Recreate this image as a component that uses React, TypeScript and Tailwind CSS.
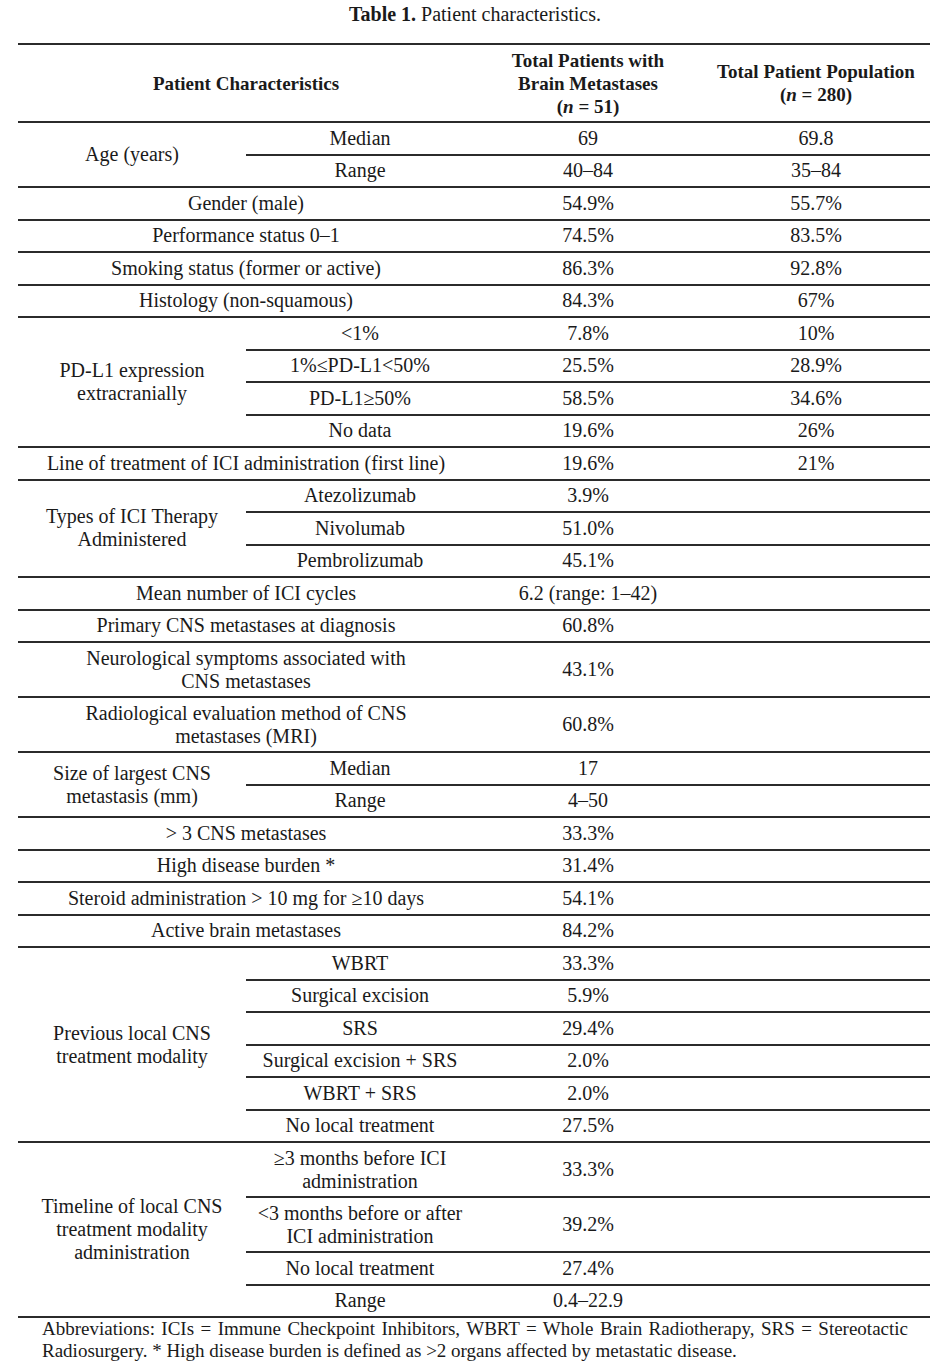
import React from "react";

type Sub = { label: string[]; c3: string; c4?: string; tall?: boolean };
type Section =
  | { kind: "full"; label: string[]; c3: string; c4?: string; tall?: boolean }
  | { kind: "group"; label: string[]; subs: Sub[] };

const data: Section[] = [
  {
    kind: "group",
    label: ["Age (years)"],
    subs: [
      { label: ["Median"], c3: "69", c4: "69.8" },
      { label: ["Range"], c3: "40–84", c4: "35–84" },
    ],
  },
  { kind: "full", label: ["Gender (male)"], c3: "54.9%", c4: "55.7%" },
  { kind: "full", label: ["Performance status 0–1"], c3: "74.5%", c4: "83.5%" },
  { kind: "full", label: ["Smoking status (former or active)"], c3: "86.3%", c4: "92.8%" },
  { kind: "full", label: ["Histology (non-squamous)"], c3: "84.3%", c4: "67%" },
  {
    kind: "group",
    label: ["PD-L1 expression", "extracranially"],
    subs: [
      { label: ["<1%"], c3: "7.8%", c4: "10%" },
      { label: ["1%≤PD-L1<50%"], c3: "25.5%", c4: "28.9%" },
      { label: ["PD-L1≥50%"], c3: "58.5%", c4: "34.6%" },
      { label: ["No data"], c3: "19.6%", c4: "26%" },
    ],
  },
  { kind: "full", label: ["Line of treatment of ICI administration (first line)"], c3: "19.6%", c4: "21%" },
  {
    kind: "group",
    label: ["Types of ICI Therapy", "Administered"],
    subs: [
      { label: ["Atezolizumab"], c3: "3.9%" },
      { label: ["Nivolumab"], c3: "51.0%" },
      { label: ["Pembrolizumab"], c3: "45.1%" },
    ],
  },
  { kind: "full", label: ["Mean number of ICI cycles"], c3: "6.2 (range: 1–42)" },
  { kind: "full", label: ["Primary CNS metastases at diagnosis"], c3: "60.8%" },
  { kind: "full", label: ["Neurological symptoms associated with", "CNS metastases"], c3: "43.1%", tall: true },
  { kind: "full", label: ["Radiological evaluation method of CNS", "metastases (MRI)"], c3: "60.8%", tall: true },
  {
    kind: "group",
    label: ["Size of largest CNS", "metastasis (mm)"],
    subs: [
      { label: ["Median"], c3: "17" },
      { label: ["Range"], c3: "4–50" },
    ],
  },
  { kind: "full", label: ["> 3 CNS metastases"], c3: "33.3%" },
  { kind: "full", label: ["High disease burden *"], c3: "31.4%" },
  { kind: "full", label: ["Steroid administration > 10 mg for ≥10 days"], c3: "54.1%" },
  { kind: "full", label: ["Active brain metastases"], c3: "84.2%" },
  {
    kind: "group",
    label: ["Previous local CNS", "treatment modality"],
    subs: [
      { label: ["WBRT"], c3: "33.3%" },
      { label: ["Surgical excision"], c3: "5.9%" },
      { label: ["SRS"], c3: "29.4%" },
      { label: ["Surgical excision + SRS"], c3: "2.0%" },
      { label: ["WBRT + SRS"], c3: "2.0%" },
      { label: ["No local treatment"], c3: "27.5%" },
    ],
  },
  {
    kind: "group",
    label: ["Timeline of local CNS", "treatment modality", "administration"],
    subs: [
      { label: ["≥3 months before ICI", "administration"], c3: "33.3%", tall: true },
      { label: ["<3 months before or after", "ICI administration"], c3: "39.2%", tall: true },
      { label: ["No local treatment"], c3: "27.4%" },
      { label: ["Range"], c3: "0.4–22.9" },
    ],
  },
];

function Lines({ lines }: { lines: string[] }) {
  return (
    <>
      {lines.map((l, i) => (
        <React.Fragment key={i}>
          {i > 0 && <br />}
          {l}
        </React.Fragment>
      ))}
    </>
  );
}

const cell = "flex items-center justify-center text-center";

export default function App() {
  return (
    <div
      className="w-[950px] h-[1362px] bg-white text-[#1a1a1a] text-[20px] leading-[23px]"
      style={{ fontFamily: '"Liberation Serif", "Times New Roman", serif' }}
    >
      <div className="h-[43px] pt-[3px] text-center text-[20px] leading-[23px]">
        <span className="font-bold">Table 1.</span> Patient characteristics.
      </div>
      <div className="mx-[18px] w-[912px] border-t-2 border-[#2b2b2b]">
        <div className="flex h-[78px] border-b-2 border-[#2b2b2b] font-bold text-[19px] leading-[23px]">
          <div className={`${cell} w-[456px]`}>
            <div>Patient Characteristics</div>
          </div>
          <div className={`${cell} w-[228px] pt-[1px]`}>
            <div>
              Total Patients with
              <br />
              Brain Metastases
              <br />(<i>n</i> = 51)
            </div>
          </div>
          <div className={`${cell} w-[228px] pb-[1px]`}>
            <div>
              Total Patient Population
              <br />(<i>n</i> = 280)
            </div>
          </div>
        </div>
        {data.map((s, si) =>
          s.kind === "full" ? (
            <div key={si} className="flex border-b-2 border-[#2b2b2b]">
              <div className={`${cell} w-[456px] ${s.tall ? "h-[53px]" : "h-[30.5px]"}`}>
                <div>
                  <Lines lines={s.label} />
                </div>
              </div>
              <div className={`${cell} w-[228px]`}>
                <div>{s.c3}</div>
              </div>
              <div className={`${cell} w-[228px]`}>
                <div>{s.c4 ?? ""}</div>
              </div>
            </div>
          ) : (
            <div key={si} className="flex border-b-2 border-[#2b2b2b]">
              <div className={`${cell} w-[228px]`}>
                <div>
                  <Lines lines={s.label} />
                </div>
              </div>
              <div className="flex w-[684px] flex-col">
                {s.subs.map((sub, i) => (
                  <div
                    key={i}
                    className={`flex ${i < s.subs.length - 1 ? "border-b-2 border-[#2b2b2b]" : ""}`}
                  >
                    <div className={`${cell} w-[228px] ${sub.tall ? "h-[53px]" : "h-[30.5px]"}`}>
                      <div>
                        <Lines lines={sub.label} />
                      </div>
                    </div>
                    <div className={`${cell} w-[228px]`}>
                      <div>{sub.c3}</div>
                    </div>
                    <div className={`${cell} w-[228px]`}>
                      <div>{sub.c4 ?? ""}</div>
                    </div>
                  </div>
                ))}
              </div>
            </div>
          )
        )}
      </div>
      <div className="ml-[42px] w-[866px] pt-0 text-[19px] leading-[22px]">
        <div className="text-justify [text-align-last:justify]">
          Abbreviations: ICIs = Immune Checkpoint Inhibitors, WBRT = Whole Brain Radiotherapy, SRS = Stereotactic
        </div>
        <div>Radiosurgery. * High disease burden is defined as &gt;2 organs affected by metastatic disease.</div>
      </div>
    </div>
  );
}
